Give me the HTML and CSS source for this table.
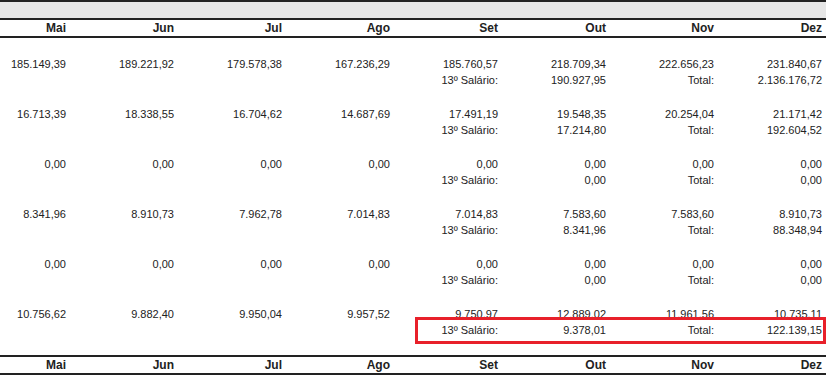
FILE: index.html
```html
<!DOCTYPE html>
<html lang="pt">
  <head>
    <meta charset="UTF-8" />
    <title>Folha anual</title>
    <link rel="stylesheet" href="styles.css">
  </head>
  <body>
    <div class="report">
      <div class="band"></div>
      <div class="grid head">
        <div>Mai</div><div>Jun</div><div>Jul</div><div>Ago</div>
        <div>Set</div><div>Out</div><div>Nov</div><div>Dez</div>
      </div>

      <div class="grid row">
        <div>185.149,39</div><div>189.221,92</div><div>179.578,38</div><div>167.236,29</div>
        <div>185.760,57</div><div>218.709,34</div><div>222.656,23</div><div>231.840,67</div>
        <div class="skip"></div>
        <div>13º Salário:</div><div>190.927,95</div><div>Total:</div><div>2.136.176,72</div>
      </div>

      <div class="grid row">
        <div>16.713,39</div><div>18.338,55</div><div>16.704,62</div><div>14.687,69</div>
        <div>17.491,19</div><div>19.548,35</div><div>20.254,04</div><div>21.171,42</div>
        <div class="skip"></div>
        <div>13º Salário:</div><div>17.214,80</div><div>Total:</div><div>192.604,52</div>
      </div>

      <div class="grid row">
        <div>0,00</div><div>0,00</div><div>0,00</div><div>0,00</div>
        <div>0,00</div><div>0,00</div><div>0,00</div><div>0,00</div>
        <div class="skip"></div>
        <div>13º Salário:</div><div>0,00</div><div>Total:</div><div>0,00</div>
      </div>

      <div class="grid row">
        <div>8.341,96</div><div>8.910,73</div><div>7.962,78</div><div>7.014,83</div>
        <div>7.014,83</div><div>7.583,60</div><div>7.583,60</div><div>8.910,73</div>
        <div class="skip"></div>
        <div>13º Salário:</div><div>8.341,96</div><div>Total:</div><div>88.348,94</div>
      </div>

      <div class="grid row">
        <div>0,00</div><div>0,00</div><div>0,00</div><div>0,00</div>
        <div>0,00</div><div>0,00</div><div>0,00</div><div>0,00</div>
        <div class="skip"></div>
        <div>13º Salário:</div><div>0,00</div><div>Total:</div><div>0,00</div>
      </div>

      <div class="grid row last">
        <div>10.756,62</div><div>9.882,40</div><div>9.950,04</div><div>9.957,52</div>
        <div>9.750,97</div><div>12.889,02</div><div>11.961,56</div><div>10.735,11</div>
        <div class="skip"></div>
        <div>13º Salário:</div><div>9.378,01</div><div>Total:</div><div>122.139,15</div>
        <div class="mark"></div>
      </div>

      <div class="grid head foot">
        <div>Mai</div><div>Jun</div><div>Jul</div><div>Ago</div>
        <div>Set</div><div>Out</div><div>Nov</div><div>Dez</div>
      </div>
    </div>
  </body>
</html>
```

FILE: styles.css
```css
* {
  margin: 0;
  padding: 0;
  box-sizing: border-box;
}
body {
  font-family: "Liberation Sans", Arial, sans-serif;
  background-color: #fff;
  color: #222;
}
.report {
  width: 826px;
}
.band {
  height: 18px;
  border-top: 2px solid #222;
  background-color: #e6e6e6;
}
.grid {
  display: grid;
  grid-template-columns: 68px repeat(7, 108px);
}
.grid div {
  text-align: right;
  padding-right: 2px;
}
.head {
  border-top: 2px solid #222;
  border-bottom: 2px solid #222;
  font-size: 12px;
  font-weight: bold;
  line-height: 16px;
  height: 20px;
}
.foot {
  margin-top: 17px;
}
.row {
  font-size: 11px;
  line-height: 16px;
  height: 50px;
  padding-top: 18px;
}
.row .skip {
  grid-column: 1 / span 4;
}
.last {
  position: relative;
}
.row .mark {
  position: absolute;
  left: 415px;
  top: 29px;
  width: 411px;
  height: 27px;
  border: 3px solid #e8202a;
  padding: 0;
}
```
